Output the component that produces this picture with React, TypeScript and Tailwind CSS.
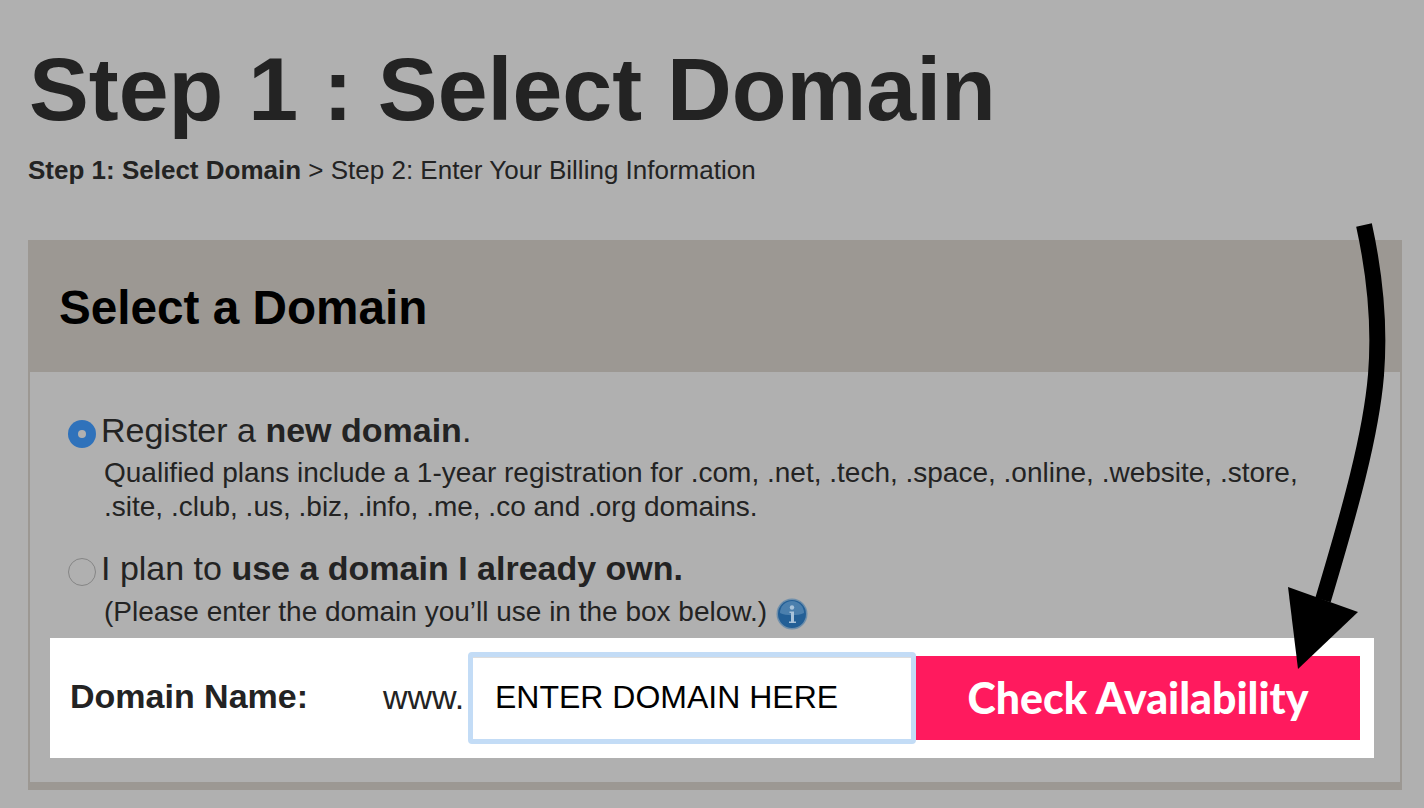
const sans = "font-['Liberation_Sans',Arial,sans-serif]";

function Arrow() {
  return (
    <svg className="pointer-events-none absolute top-0 left-0" width="1424" height="808" viewBox="0 0 1424 808" fill="none">
      <path d="M1364 225C1375 275 1380 325 1376 375C1371 435 1350 510 1323 600" stroke="#000" strokeWidth="16" />
      <path d="M1288 587L1358 612L1298 669Z" fill="#000" />
    </svg>
  );
}

function Radio({ checked }: { checked?: boolean }) {
  if (checked) {
    return (
      <span className="mt-[10px] flex h-7 w-7 shrink-0 items-center justify-center rounded-full bg-[#2f72bb]">
        <span className="h-2 w-2 rounded-full bg-[#b0b0b0]" />
      </span>
    );
  }
  return <span className="mt-[10px] h-7 w-7 shrink-0 rounded-full border-[1.500px] border-[#858585] bg-[#b0b0b0]" />;
}

function InfoIcon() {
  return (
    <svg width="32" height="32" viewBox="0 0 32 32" className="mt-[4px] shrink-0">
      <circle cx="16" cy="16" r="15.500" fill="#6f8fab" />
      <circle cx="16" cy="16" r="14" fill="#235f96" />
      <path d="M4 15a12 12 0 0 1 24 0c-6 3-18 3-24 0z" fill="#4b7fad" />
      <circle cx="16" cy="9.500" r="2.200" fill="#a9c3da" />
      <path d="M13.500 13.500h4.500v10h2v1.500h-7v-1.500h2v-8.500h-1.500z" fill="#a9c3da" />
    </svg>
  );
}

export default function App() {
  return (
    <div className={`relative h-[808px] w-[1424px] overflow-hidden bg-[#b0b0b0] text-[#232323] ${sans}`}>
      <div className="px-[28px] pt-[33px]">
        <h1 className="pl-[1px] text-[89.700px] leading-[112px] font-bold">Step 1 : Select Domain</h1>
        <p className="mt-[10px] text-[26px] leading-[30px]">
          <b>Step 1: Select Domain</b> &gt; Step 2: Enter Your Billing Information
        </p>

        <div className="mt-[55px] h-[550px] w-[1374px] border-x-2 border-b-[8px] border-[#9c9893]">
          <div className="-mx-[2px] flex h-[132px] items-center bg-[#9c9893] pt-[4px] pl-[31px]">
            <h2 className="text-[47.700px] font-bold text-black">Select a Domain</h2>
          </div>

          <div className="pt-[38px] pl-[38px]">
            <div className="flex items-start gap-[5px]">
              <Radio checked />
              <span className="text-[34px] leading-[40px]">Register a <b>new domain</b>.</span>
            </div>
            <p className="mt-[6px] ml-[36px] w-[1220px] text-[28px] leading-[34px]">
              Qualified plans include a 1-year registration for .com, .net, .tech, .space, .online, .website, .store, .site, .club, .us, .biz, .info, .me, .co and .org domains.
            </p>
            <div className="mt-[24px] flex items-start gap-[5px]">
              <Radio />
              <span className="text-[34px] leading-[40px]">I plan to <b>use a domain I already own.</b></span>
            </div>
            <div className="mt-[6px] ml-[36px] flex items-center gap-[9px] text-[28px] leading-[34px]">
              <span>(Please enter the domain you’ll use in the box below.)</span>
              <InfoIcon />
            </div>
          </div>

          <div className="mt-[8px] ml-[20px] flex h-[120px] w-[1324px] items-center bg-white pl-[20px]">
            <span className="w-[313px] pb-[4px] text-[34px] font-bold">Domain Name:</span>
            <span className="w-[85px] pb-[2px] text-[34px]">www.</span>
            <div className="flex h-[92px] w-[448px] items-center rounded-[4px] border-[5px] border-[#c3dcf6] bg-white pb-[2px] pl-[22px] text-[32px] text-black shadow-[inset_0_1px_0_#ddd]">
              ENTER DOMAIN HERE
            </div>
            <div className="flex h-[84px] w-[444px] items-center justify-center bg-[#ff1a5e] font-['Lato',sans-serif] text-[42.800px] font-black text-white">
              Check Availability
            </div>
          </div>
        </div>
      </div>
      <Arrow />
    </div>
  );
}
